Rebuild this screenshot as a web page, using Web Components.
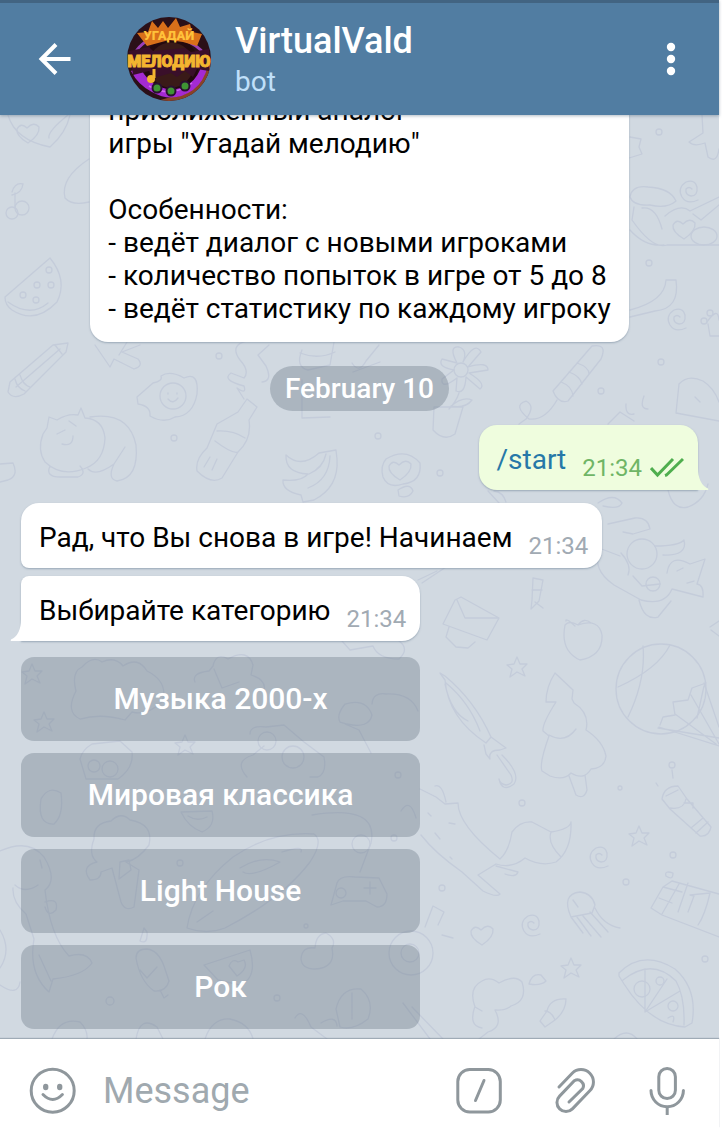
<!DOCTYPE html>
<html lang="ru">
<head>
<meta charset="utf-8">
<meta name="viewport" content="width=device-width, initial-scale=1">
<title>VirtualVald</title>
<style>
  body { margin: 0; background: #fff; font-family: Roboto, "Noto Sans", sans-serif; color: #000; }
</style>
</head>
<body>
<chat-app></chat-app>

<template id="t-app">
  <style>
    :host { display: flex; flex-direction: column; height: 100vh; box-sizing: border-box; padding-right: 3px; }
    main { position: relative; flex: 1; min-height: 0; overflow: hidden; display: flex; flex-direction: column; justify-content: flex-end; padding: 0 21px 10px; }
    chat-date { margin: 24px 0 14px; }
    .out { margin-bottom: 13px; }
    .group { display: flex; flex-direction: column; gap: 8px; }
    inline-keyboard { margin-top: 16px; }
    .fit { display: flex; flex-direction: column; width: fit-content; }
  </style>
  <chat-header name="VirtualVald" status="bot"></chat-header>
  <main>
    <chat-wallpaper></chat-wallpaper>
    <chat-bubble kind="info">приближенный аналог<br>игры "Угадай мелодию"<br><br>Особенности:<br>- ведёт диалог с новыми игроками<br>- количество попыток в игре от 5 до 8<br>- ведёт статистику по каждому игроку</chat-bubble>
    <chat-date>February 10</chat-date>
    <chat-bubble class="out" kind="out" time="21:34"><bot-command>/start</bot-command></chat-bubble>
    <div class="group">
      <chat-bubble kind="first" time="21:34">Рад, что Вы снова в игре! Начинаем</chat-bubble>
      <div class="fit">
        <chat-bubble kind="last" time="21:34">Выбирайте категорию</chat-bubble>
        <inline-keyboard>
          <keyboard-button>Музыка 2000-х</keyboard-button>
          <keyboard-button>Мировая классика</keyboard-button>
          <keyboard-button>Light House</keyboard-button>
          <keyboard-button>Рок</keyboard-button>
        </inline-keyboard>
      </div>
    </div>
  </main>
  <chat-composer></chat-composer>
</template>

<template id="t-header">
  <style>
    :host { display: block; position: relative; z-index: 2; background: #517da2; border-top: 3px solid #426482; box-shadow: 0 1px 3px rgba(60,85,110,.4); }
    header { display: flex; align-items: center; min-height: 112px; padding: 0 24px 0 31px; }
    button { all: unset; display: block; width: 48px; height: 48px; flex: none; cursor: pointer; }
    svg { display: block; }
    chat-avatar { margin: 0 24px 0 48px; }
    .who { flex: 1; min-width: 0; display: flex; flex-direction: column; gap: 3px; }
    h1 { margin: 0; font-size: 36px; line-height: 42px; font-weight: 500; color: #fff; }
    p { margin: 0; font-size: 28px; line-height: 33px; color: #c0e0fa; }
  </style>
  <header>
    <button aria-label="Back"><svg width="48" height="48" viewBox="0 0 48 48" fill="none" stroke="#fff" stroke-width="4"><path d="M39.500 24H11M25 9.500L10.500 24L25 38.500"/></svg></button>
    <chat-avatar></chat-avatar>
    <div class="who"><h1></h1><p></p></div>
    <button aria-label="Menu"><svg width="48" height="48" viewBox="0 0 48 48" fill="#fff"><circle cx="24" cy="12" r="4.200"/><circle cx="24" cy="24" r="4.200"/><circle cx="24" cy="36" r="4.200"/></svg></button>
  </header>
</template>

<template id="t-avatar">
  <style>
    :host { display: block; width: 84px; height: 84px; flex: none; border-radius: 50%; overflow: hidden; }
    svg { display: block; width: 100%; height: 100%; font-family: Roboto, "Liberation Sans", sans-serif; font-weight: 900; text-anchor: middle; }
  </style>
  <svg viewBox="0 0 84 84" role="img" aria-label="Угадай мелодию">
    <rect width="84" height="84" fill="#2b1018"/>
    <path d="M84 44A42 42 0 0 1 30 84L44 80A34 34 0 0 0 78 46Z" fill="#8a4328"/>
    <path d="M3 50Q7 30 22 23Q42 12 62 25Q76 32 81 43" fill="none" stroke="#9a3fb8" stroke-width="3"/>
    <circle cx="44" cy="48" r="25" fill="#3a1a18" stroke="#23090f" stroke-width="5"/>
    <path d="M4 54L13 50Q20 65 33 70Q48 76 62 67Q72 60 75 46L81 48Q77 65 66 73Q46 87 25 75Q11 68 4 54Z" fill="#a42ad2"/>
    <path d="M22 69Q44 82 65 66" fill="none" stroke="#d26af0" stroke-width="1.500"/>
    <g fill="#3f9434" stroke="#2a1030" stroke-width="2"><circle cx="30" cy="71" r="4.500"/><circle cx="44" cy="74" r="4.500"/><circle cx="58" cy="69" r="4.500"/></g>
    <path d="M10 16L21 15L25 4L31 11L36 4L41 11L49 1L53 10L63 7L65 15L75 17L70 29L56 25L42 23L20 29Z" fill="#d9701a"/>
    <text x="42" y="23" fill="#ffc23a" font-size="13">УГАДАЙ</text>
    <path d="M2 34L22 30L26 34L58 31L64 35L82 32V54L70 52L66 60L58 54L50 60L44 56L30 60L22 54L6 58Z" fill="#3a0f2a"/>
    <text x="42" y="50" fill="#f3b530" stroke="#f3b530" font-size="16">МЕЛОДИЮ</text>
    <path d="M27 52V61" stroke="#f3b530" stroke-width="3"/><circle cx="24" cy="62" r="4" fill="#f3b530"/>
  </svg>
</template>

<template id="t-bubble">
  <style>
    :host { display: block; position: relative; width: fit-content; max-width: 100%; box-sizing: border-box; border-radius: 18px; background: var(--fill); box-shadow: 0 1px 2px rgba(110,130,150,.55); font-size: 28px; line-height: 33px; padding: 18px 14px 14px 18px; --fill: #fff; --meta: #a1aab3; }
    :host([kind="info"]) { align-self: center; padding: 18px 18px 17px; }
    :host([kind="out"]) { align-self: flex-end; --fill: #effdde; --meta: #6fb566; border-bottom-right-radius: 0; }
    :host([kind="first"]) { border-bottom-left-radius: 8px; }
    :host([kind="last"]) { border-top-left-radius: 8px; border-bottom-left-radius: 0; }
    .row { display: flex; gap: 16px; }
    .meta { display: flex; gap: 8px; font-size: 24px; line-height: 28px; color: var(--meta); padding-top: 11px; height: 22px; }
    .checks, .tail { display: none; }
    :host([kind="out"]) .checks { display: block; }
    .tail { position: absolute; bottom: 0; width: 11px; height: 22px; fill: var(--fill); }
    :host([kind="out"]) .tail { display: block; left: 100%; }
    :host([kind="last"]) .tail { display: block; right: 100%; transform: scaleX(-1); }
  </style>
  <div class="row"><div><slot></slot></div>
    <div class="meta"><time></time>
      <svg class="checks" width="34" height="28" viewBox="0 0 34 28" fill="none" stroke="#4fae4e" stroke-width="3"><path d="M1 14L7.500 21L23 5M15 21.500L16.500 21L33 5"/></svg>
    </div>
  </div>
  <svg class="tail" viewBox="0 0 11 22"><path d="M0 0Q0 16 10 20.500Q11 22 9 22H0Z"/></svg>
</template>

<template id="t-command">
  <style>:host { display: inline; } a { color: #2678a8; text-decoration: none; }</style>
  <a href="#start"><slot></slot></a>
</template>

<template id="t-date">
  <style>
    :host { display: block; position: relative; align-self: center; padding: 6px 15px; border-radius: 23px; background: rgba(100,114,128,.35); color: #fff; font-size: 28px; line-height: 33px; font-weight: 500; }
  </style>
  <slot></slot>
</template>

<template id="t-keyboard">
  <style>:host { display: flex; flex-direction: column; gap: 12px; position: relative; }</style>
  <slot></slot>
</template>

<template id="t-key">
  <style>
    :host { display: block; }
    button { display: block; width: 100%; height: 84px; border: 0; border-radius: 13px; padding: 0 16px; background: rgba(100,114,128,.35); color: #fff; font: 500 30px/34px Roboto, "Noto Sans", sans-serif; cursor: pointer; }
  </style>
  <button><slot></slot></button>
</template>

<template id="t-composer">
  <style>
    :host { display: block; position: relative; z-index: 2; background: #fff; box-shadow: 0 -1px 1px rgba(110,125,140,.5); }
    form { display: flex; align-items: center; gap: 46px; padding: 28px 28px 13px 29px; }
    button { all: unset; display: block; width: 48px; height: 48px; flex: none; cursor: pointer; }
    svg { display: block; fill: none; stroke: #8f979c; stroke-width: 3; }
    label { flex: 1; min-width: 0; margin-left: -20px; }
    input { display: block; width: 100%; box-sizing: border-box; border: 0; outline: 0; padding: 0; margin: 0; background: none; height: 48px; font: 36px/42px Roboto, "Noto Sans", sans-serif; color: #222; }
    input::placeholder { color: #a0a9af; opacity: 1; }
  </style>
  <form>
    <button type="button" aria-label="Emoji"><svg width="48" height="48" viewBox="0 0 48 48"><circle cx="23.700" cy="23.700" r="21.500"/><path d="M14 27.500Q23.700 37.500 33.400 27.500" stroke-linecap="round"/><g fill="#8f979c" stroke="none"><ellipse cx="16.700" cy="20" rx="2.700" ry="3.300"/><ellipse cx="30.700" cy="20" rx="2.700" ry="3.300"/></g></svg></button>
    <label><input type="text" placeholder="Message" aria-label="Message"></label>
    <button type="button" aria-label="Commands"><svg width="48" height="48" viewBox="0 0 48 48"><rect x="2.800" y="2.500" width="42.500" height="42.500" rx="12"/><path d="M29 13.500L20.500 33.500" stroke-linecap="round"/></svg></button>
    <button type="button" aria-label="Attach"><svg width="48" height="48" viewBox="0 0 48 48"><path stroke-linecap="round" d="M10 20L23.200 6.200A12.400 12.400 0 0 1 40.800 23.800L23.400 41.900A9 9 0 0 1 10.600 29.100L25.300 13.800A6 6 0 0 1 33.700 21.700L20 35"/></svg></button>
    <button type="button" aria-label="Voice message"><svg width="48" height="48" viewBox="0 0 48 48"><rect x="15.800" y="1.500" width="16.600" height="30" rx="8.300"/><path d="M8 23.500A16.200 16.200 0 0 0 40.400 23.500" stroke-linecap="round"/><path d="M24.200 40V48"/></svg></button>
  </form>
</template>

<template id="t-wallpaper">
  <style>
    :host { display: block; position: absolute; inset: 0; background: #d1d9e1; }
    svg { display: block; width: 100%; height: 100%; fill: none; stroke: #c4ccda; stroke-width: 1.3; stroke-linecap: round; stroke-linejoin: round; }
  </style>
  <svg viewBox="0 115 719 924" preserveAspectRatio="xMidYMid slice" aria-hidden="true">
    <defs>
      <path id="star" d="M0-10L3-3L10-3L5 2L8 9L0 5L-7 10L-5 2L-10-2L-3-3Z"/>
      <path id="curl" d="M9 9Q-2 14-7 6Q-12-3-3-9Q6-12 8-4Q9 5 2 5Q-4 4-3-2Q0-5 3-2"/>
      <path id="heart" d="M0 10Q-12 3-11-4Q-7-11-1-5Q6-12 11-6Q12 2 0 10Z"/>
    </defs>
    <!-- left edge: heart leaf, cherries, melon, pencil -->
    <path d="M8 115Q15 140 50 147Q66 133 70 115M49 138Q47 132 68 115"/><use href="#heart" x="28" y="133"/>
    <circle cx="22" cy="208" r="7"/><circle cx="12" cy="213" r="6"/><path d="M15 207V193M12 192Q15 182 23 184Q22 193 12 195M89 159Q60 178 65 198Q72 206 89 202"/>
    <path d="M5 297L50 258Q68 280 57 302Q35 325 12 310Q5 305 5 297ZM8 302Q30 318 48 303"/>
    <circle cx="23" cy="295" r="3"/><circle cx="37" cy="285" r="3"/><circle cx="51" cy="285" r="3"/><circle cx="49" cy="270" r="3"/><circle cx="36" cy="300" r="3"/>
    <path d="M10 382L53 345L68 343L66 352L24 394Q13 400 8 392ZM15 379Q17 388 25 391M20 375Q23 385 30 387M55 345L62 354M16 387L60 349"/>
    <path d="M95 345L110 367L114 359L134 369Q144 366 138 359L122 352L140 345M119 355L127 342"/>
    <!-- cat, egg, bottle, bananas -->
    <path d="M47 428L49 417L57 420Q68 413 78 415L81 408L85 418Q103 419 105 438Q104 461 86 468Q62 478 45 462Q37 450 43 434ZM90 417Q129 411 136 445Q139 478 117 481Q107 479 114 464L125 447M114 464Q96 477 88 469M50 466Q45 477 60 477H78Q87 474 80 466M57 434L65 430M69 421L76 426M62 444Q73 447 73 436"/>
    <path d="M137 397L153 383Q163 381 161 376Q170 370 184 378Q199 371 197 394Q193 416 175 417Q164 424 150 416Q151 406 138 404Z"/><circle cx="173" cy="396" r="13"/><path d="M168 393V394M177 393V394M168 399Q173 405 178 398"/>
    <path d="M247 399L257 407L249 420Q252 439 238 452L222 478Q211 485 197 471Q195 459 207 448L217 424L238 412ZM217 431Q233 430 245 438M215 441Q232 454 238 452M210 457L204 467M217 459L212 470M244 399L237 388Q247 395 244 386Q221 380 231 373L244 378Q250 371 240 360Q229 345 247 341M262 382Q273 381 266 366L258 355L269 345"/>
    <path d="M286 455Q301 469 319 453L336 450L337 459Q339 487 314 500L303 502L301 495Q282 491 283 480Q301 482 308 474Q285 473 286 455ZM309 474Q323 468 326 454M308 488Q329 480 330 456"/>
    <circle cx="219" cy="356" r="3"/><circle cx="174" cy="438" r="3"/><path d="M0 464L13 463Q19 476 8 480L0 482"/>
    <path d="M302 350Q295 367 308 370L330 365L334 342M300 353Q318 360 335 352M302 380V418L330 417M352 363Q359 374 366 361L379 345M353 372L380 362"/>
    <!-- flower pot, firecracker, speech bubbles -->
    <circle cx="461" cy="370" r="7"/><path d="M457 363Q448 346 459 347Q468 350 463 362Q475 341 481 352L468 367Q488 361 488 370L469 373Q487 384 480 389L466 377Q465 395 456 391L457 378Q441 390 442 379L454 370Q437 367 442 359ZM459 393Q456 402 449 409M434 407H463L455 434Q444 442 433 430ZM451 406Q463 396 472 400Q465 409 451 406"/>
    <path d="M553 391L592 346Q608 343 601 359L568 401Q558 404 553 391ZM561 382Q572 386 573 396M569 372Q580 376 582 384M577 363Q589 367 589 374M557 400Q545 421 529 419Q512 405 526 401Q536 406 526 419L519 424"/>
    <path d="M386 459Q406 447 420 463Q422 482 403 484Q388 489 383 477Q380 466 386 459ZM398 490Q410 482 413 491Q409 499 399 496Z"/><use href="#heart" x="400" y="470"/>
    <circle cx="440" cy="473" r="3"/><circle cx="601" cy="391" r="3"/><circle cx="661" cy="362" r="3"/><circle cx="378" cy="436" r="3"/>
    <path d="M676 413L679 384Q688 374 703 381Q714 388 719 402M676 413L719 421M695 397L700 402M608 424L620 412L634 421M626 404Q625 416 634 414M644 396Q639 409 648 409"/>
    <!-- right side: critters, ribbon, paw -->
    <circle cx="659" cy="132" r="3"/><path d="M630 137L641 139L639 147L642 154L629 158M702 115L703 133L689 142Q694 147 705 143L708 157Q717 164 719 149M630 197Q632 185 648 187Q670 188 676 201Q667 209 650 205Q633 206 630 197M634 207L632 220Q653 250 667 245L719 245M642 208Q656 206 662 229M665 216Q680 203 690 211L719 197M630 230Q645 247 664 245M693 214L701 220L719 205"/><use href="#curl" x="689" y="191"/><use href="#heart" x="684" y="229"/><ellipse cx="704" cy="236" rx="13" ry="9"/>
    <path d="M666 280H676Q680 309 655 311L630 317M666 280Q665 301 630 310"/><use href="#curl" x="677" y="319"/><circle cx="649" cy="263" r="3"/><path d="M707 322Q718 306 719 320M708 324L710 336H719"/><circle cx="710" cy="313" r="3"/><circle cx="704" cy="321" r="3"/>
    <path d="M668 490Q673 511 688 507Q704 501 708 484M488 491L499 503M506 502Q503 492 494 491M598 503Q614 492 622 503Q619 510 603 506M608 524L635 518Q648 517 650 529L633 534L623 532M599 548L620 556"/>
    <circle cx="642" cy="554" r="15"/><path d="M655 546Q679 546 684 540Q688 556 663 555M600 549Q591 569 614 585L641 600Q665 606 672 589L703 597Q704 585 697 584L705 559L690 564Q670 553 667 573M639 600Q644 621 658 617L671 601M621 553Q632 565 628 575M633 576L642 586L660 584M677 571L683 568M687 583L694 581"/><circle cx="653" cy="584" r="7"/><path d="M422 583L446 567M418 580L437 571"/>
    <path d="M455 600L461 597L499 618L487 640L443 624ZM457 600L465 618L498 618M449 627L446 637L456 647L468 648L475 642M533 578L543 580L539 601L531 609L532 600ZM532 590H542M535 602L543 608"/>
    <path d="M565 625Q569 620 578 625Q599 618 602 635Q603 656 580 660Q560 651 565 625ZM575 626Q565 617 566 621M578 625Q584 617 591 623M710 627L719 621M711 630L719 636"/>
    <!-- balloon, tree, umbrella -->
    <circle cx="661" cy="689" r="45"/><path d="M670 645Q658 669 618 687M643 646Q646 680 628 717M659 727L719 746M660 725L663 717L675 715L673 702L688 700L692 688L706 683M704 683L719 727M691 695L719 744M675 714L716 744M658 728L719 738M704 686L697 718"/>
    <path d="M555 673Q546 687 546 702L556 702Q542 724 543 731L549 736Q539 764 542 771L550 776Q564 781 571 773Q584 781 591 769Q605 768 606 756Q603 741 586 730Q590 713 574 703L572 699L573 690ZM549 735Q565 744 576 729M569 776L576 795Q584 800 587 790L585 775"/>
    <path d="M440 673L445 676Q475 701 491 737L486 743Q448 718 445 680ZM446 683Q469 702 480 731M445 684Q451 713 468 721M491 737L506 748L500 750Q488 750 490 759L486 754L484 745M497 755L511 775Q515 784 506 785Q500 784 499 779M502 755Q521 774 514 784Q502 793 499 779"/>
    <use href="#star" x="517" y="667"/><use href="#star" x="639" y="836"/><use href="#star" x="571" y="968"/><use href="#star" x="32" y="674"/><use href="#star" x="44" y="722"/><use href="#star" x="185" y="745"/>
    <circle cx="620" cy="788" r="2"/><circle cx="672" cy="765" r="3"/><circle cx="522" cy="803" r="3"/><circle cx="673" cy="855" r="3"/><circle cx="626" cy="882" r="3"/><circle cx="705" cy="959" r="3"/><circle cx="442" cy="888" r="3"/>
    <!-- fox, torch, jellyfish, pizza -->
    <path d="M420 789L436 797L445 804L458 803Q458 825 500 859Q509 851 512 832Q520 821 532 822L551 832Q570 829 571 822Q572 850 556 862Q541 867 525 858Q512 869 496 864L478 875L500 894Q497 898 483 891L462 872Q435 853 421 835M435 786Q442 783 446 802M551 832Q547 843 561 857M496 866L518 872Q516 878 505 874M428 813L431 816M435 833L440 839M449 823L455 824M450 857L452 859"/>
    <path d="M662 799Q664 786 678 786L687 799L711 827Q709 837 700 836L670 809ZM670 808Q684 810 686 799M666 796L678 790M684 803L693 803L693 808M691 828L703 818M696 833L708 822M673 778L672 770M658 786L656 783"/>
    <use href="#curl" x="599" y="857"/><use href="#curl" x="531" y="925"/><use href="#heart" x="482" y="935"/>
    <path d="M571 917Q561 894 580 892Q592 893 595 905L592 913ZM571 917L583 933M577 917L591 936M583 916L601 937M590 912L608 932M595 908Q603 925 620 928M573 900L578 907"/>
    <path d="M651 908L663 887L672 881L719 894M651 908L662 915L719 937M663 887L682 892M659 898L672 903M662 914L679 884M678 912L688 883M688 912L694 896L690 895L710 893Q705 915 698 925M666 876Q664 870 673 873Q673 881 666 876"/>
    <path d="M619 973Q643 949 675 969Q698 989 692 1023L685 1027Q650 1025 624 984L619 976ZM623 980Q652 957 676 981Q685 997 684 1025M645 969V1012L680 991M645 1012L667 979M668 1018Q676 1013 673 1022"/><circle cx="642" cy="989" r="8"/><circle cx="660" cy="981" r="4"/><circle cx="673" cy="1006" r="5"/>
    <path d="M482 1011L475 1007Q468 988 482 981Q490 976 499 983Q515 974 522 982Q528 1001 511 1006Q505 1011 495 1010Q504 1027 488 1032L479 1039M475 1006Q468 1026 482 1028M529 984Q532 973 541 975L546 981Q541 986 529 984M547 1011Q550 998 566 999Q566 1011 555 1020L545 1027L540 1021ZM614 1039Q627 1027 637 1039M545 1011Q551 1011 555 1020"/>
    <!-- behind the keyboard -->
    <path d="M80 719Q65 712 76 691Q71 672 82 667Q93 655 102 662Q115 656 123 666Q138 656 147 671Q169 682 162 702Q147 716 132 712L125 720Q101 713 80 719ZM195 682Q191 673 209 671L213 666Q216 652 228 659Q248 648 253 665L251 675Q267 680 264 691M214 669L222 688L239 682M340 722Q336 715 345 704Q366 698 372 715Q369 729 347 724ZM372 704Q373 692 386 694Q411 693 418 711M342 641L350 650L373 646Q378 659 399 659Q410 649 399 641M345 724L359 730L371 753"/>
    <path d="M80 759Q82 750 92 744L120 741L132 752Q134 768 118 779H86ZM250 734Q250 725 266 727L284 725L304 742L324 757Q327 773 318 777H310M247 777Q233 761 253 755L264 746"/><circle cx="94" cy="766" r="6"/><circle cx="110" cy="769" r="8"/><circle cx="293" cy="757" r="11"/><circle cx="267" cy="741" r="9"/>
    <path d="M41 799Q49 785 61 793Q64 815 54 824Q37 825 41 799ZM97 862Q88 855 94 839Q93 823 111 821Q121 811 130 820Q154 824 149 845Q138 860 126 862L139 870L134 907Q125 912 121 902L112 868L101 872Q101 880 90 880Q80 866 97 862M120 862L129 860L131 870L119 879ZM181 812L212 811Q216 826 202 832Q188 827 181 812M188 816Q197 822 207 817"/>
    <path d="M187 928Q193 889 233 857Q271 831 314 834Q324 841 310 862Q283 898 225 928Q207 935 187 928ZM197 922L213 911M240 868Q261 855 280 862Q252 878 243 872M282 852Q304 845 301 852M312 815Q379 804 371 843L360 872M331 905L337 883Q340 875 355 877L379 878L387 894Q387 907 377 907L366 901H343ZM364 888H376M370 882V894"/><circle cx="341" cy="893" r="5"/><circle cx="361" cy="844" r="9"/>
    <path d="M0 851Q29 838 44 857Q58 880 45 890Q50 936 69 956Q87 951 92 963Q83 976 53 979L49 992Q28 973 34 939L26 914Q12 902 13 888M15 885Q25 894 38 885M45 902Q59 897 56 910Q48 918 45 907M0 930Q12 950 0 968M0 985Q18 997 20 982M39 955L51 981M40 860L42 868"/>
    <path d="M136 958Q136 949 147 949Q158 950 164 966L169 981Q166 992 154 991Q140 981 136 958ZM140 970L147 978L157 967M160 990L164 998L168 995M144 928L140 941Q148 945 147 932ZM204 965L250 950Q258 978 240 985L218 980ZM229 966Q232 958 238 962L244 960Q249 968 237 976ZM301 959Q302 946 315 948Q316 934 326 933Q337 939 332 948Q336 968 315 969Q302 969 301 959ZM336 1009Q341 987 361 989Q375 1001 368 1019Q353 1031 340 1027ZM352 993V1019M295 1018Q302 1006 311 1027L327 1039M321 1023Q336 1014 337 1026M205 1039Q212 1018 230 1019Q249 1023 253 1039M52 1039Q60 1017 80 1022Q88 1030 87 1039M136 1039Q140 1015 157 1027L163 1039M403 1003L430 1039M412 1007L443 1039"/>
    <circle cx="411" cy="953" r="22"/><circle cx="410" cy="953" r="9"/><path d="M425 927L433 906L444 912L438 925M442 935L453 938M401 811Q410 797 416 818"/><circle cx="110" cy="1001" r="4"/><circle cx="277" cy="998" r="3"/><circle cx="180" cy="863" r="3"/><circle cx="398" cy="775" r="3"/><circle cx="306" cy="926" r="2"/><circle cx="394" cy="838" r="3"/>
  </svg>
</template>

<script>
  const define = (tag, id, setup) => customElements.define(tag, class extends HTMLElement {
    constructor() {
      super();
      this.attachShadow({ mode: "open" }).append(document.getElementById(id).content.cloneNode(true));
    }
    connectedCallback() { if (setup) setup(this, this.shadowRoot); }
  });

  define("chat-avatar", "t-avatar");
  define("chat-wallpaper", "t-wallpaper");
  define("bot-command", "t-command");
  define("chat-date", "t-date");
  define("inline-keyboard", "t-keyboard");
  define("keyboard-button", "t-key");
  define("chat-composer", "t-composer");
  define("chat-header", "t-header", (el, root) => {
    root.querySelector("h1").textContent = el.getAttribute("name");
    root.querySelector("p").textContent = el.getAttribute("status");
  });
  define("chat-bubble", "t-bubble", (el, root) => {
    const time = el.getAttribute("time");
    if (time) root.querySelector("time").textContent = time;
    else root.querySelector(".meta").remove();
  });
  define("chat-app", "t-app");
</script>
</body>
</html>
